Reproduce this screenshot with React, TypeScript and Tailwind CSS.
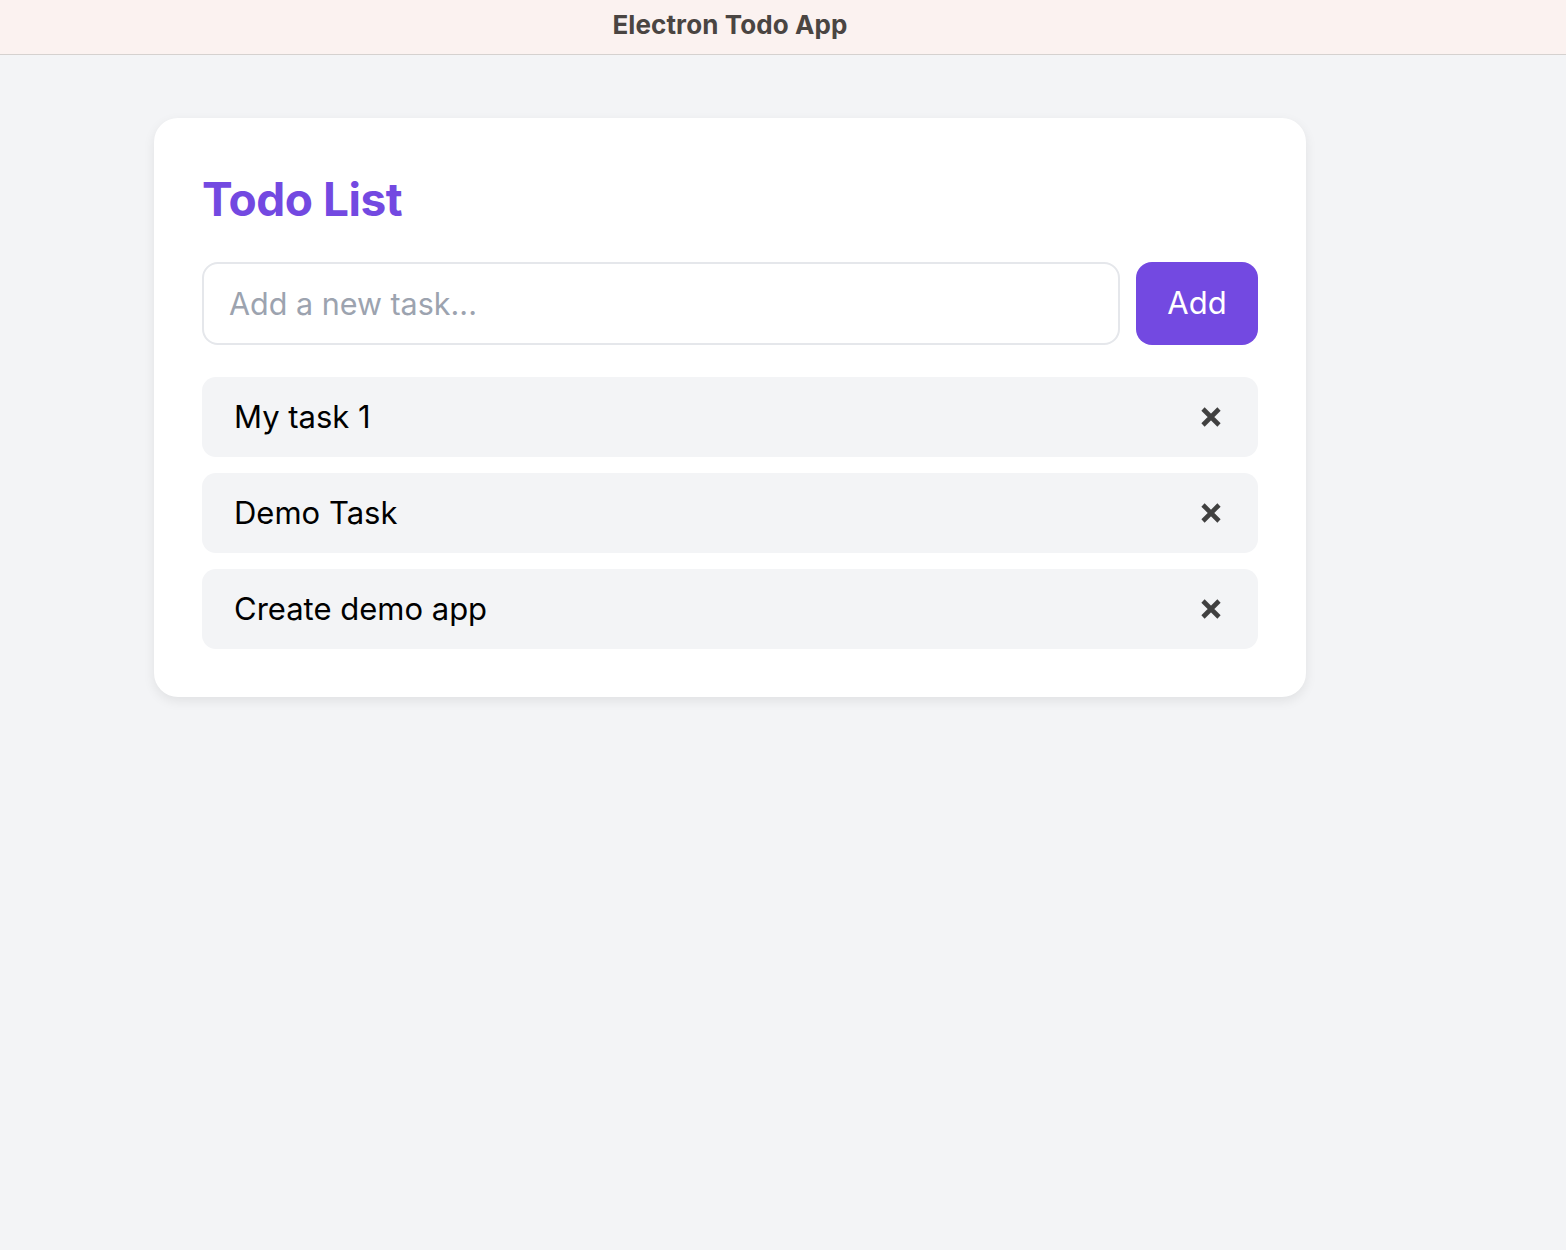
import React, { useState } from "react";

const initialTasks = ["My task 1", "Demo Task", "Create demo app"];

function CloseIcon() {
  return (
    <svg width="22" height="22" viewBox="0 0 22 22" fill="none">
      <path
        d="M3 3 L19 19 M19 3 L3 19"
        stroke="#404040"
        strokeWidth="4.6"
        strokeLinecap="butt"
      />
    </svg>
  );
}

export default function App() {
  const [tasks, setTasks] = useState<string[]>(initialTasks);
  const [text, setText] = useState("");

  const addTask = () => {
    if (!text.trim()) return;
    setTasks([...tasks, text.trim()]);
    setText("");
  };

  return (
    <div className="min-h-[1250px] bg-[#f3f4f6] font-['Inter',sans-serif]">
      {/* window title bar */}
      <header className="h-[55px] bg-[#fbf2f0] border-b border-[#d5d1cf]">
        <div className="w-[1460px] h-[49px] flex items-center justify-center">
          <h1 className="text-[26px] font-bold text-[#4a4542] tracking-[0.1px]">
            Electron Todo App
          </h1>
        </div>
      </header>

      <div className="w-[1460px] pt-[63px]">
        <section className="mx-auto w-[1152px] bg-white rounded-[24px] shadow-[0_4px_12px_rgba(0,0,0,0.08)] p-[48px]">
          <h2 className="text-[46px] leading-[60px] font-bold text-[#7349e1] tracking-[-0.5px] mt-[3px] mb-[33px]">
            Todo List
          </h2>

          <div className="flex gap-[16px] mb-[32px]">
            <input
              value={text}
              onChange={(e) => setText(e.target.value)}
              placeholder="Add a new task..."
              className="flex-1 h-[83px] border-2 border-[#e5e7eb] rounded-[16px] px-[25px] text-[30.5px] text-black placeholder:text-[#9ca3af] outline-none"
            />
            <button
              onClick={addTask}
              className="w-[122px] h-[83px] bg-[#7349e1] rounded-[16px] text-white text-[31px]"
            >
              Add
            </button>
          </div>

          <ul className="flex flex-col gap-[16px]">
            {tasks.map((task, i) => (
              <li
                key={i}
                className="h-[80px] bg-[#f3f4f6] rounded-[14px] pl-[32px] pr-[36px] flex items-center justify-between"
              >
                <span className="text-[31px] text-black">{task}</span>
                <button onClick={() => setTasks(tasks.filter((_, j) => j !== i))}>
                  <CloseIcon />
                </button>
              </li>
            ))}
          </ul>
        </section>
      </div>
    </div>
  );
}
